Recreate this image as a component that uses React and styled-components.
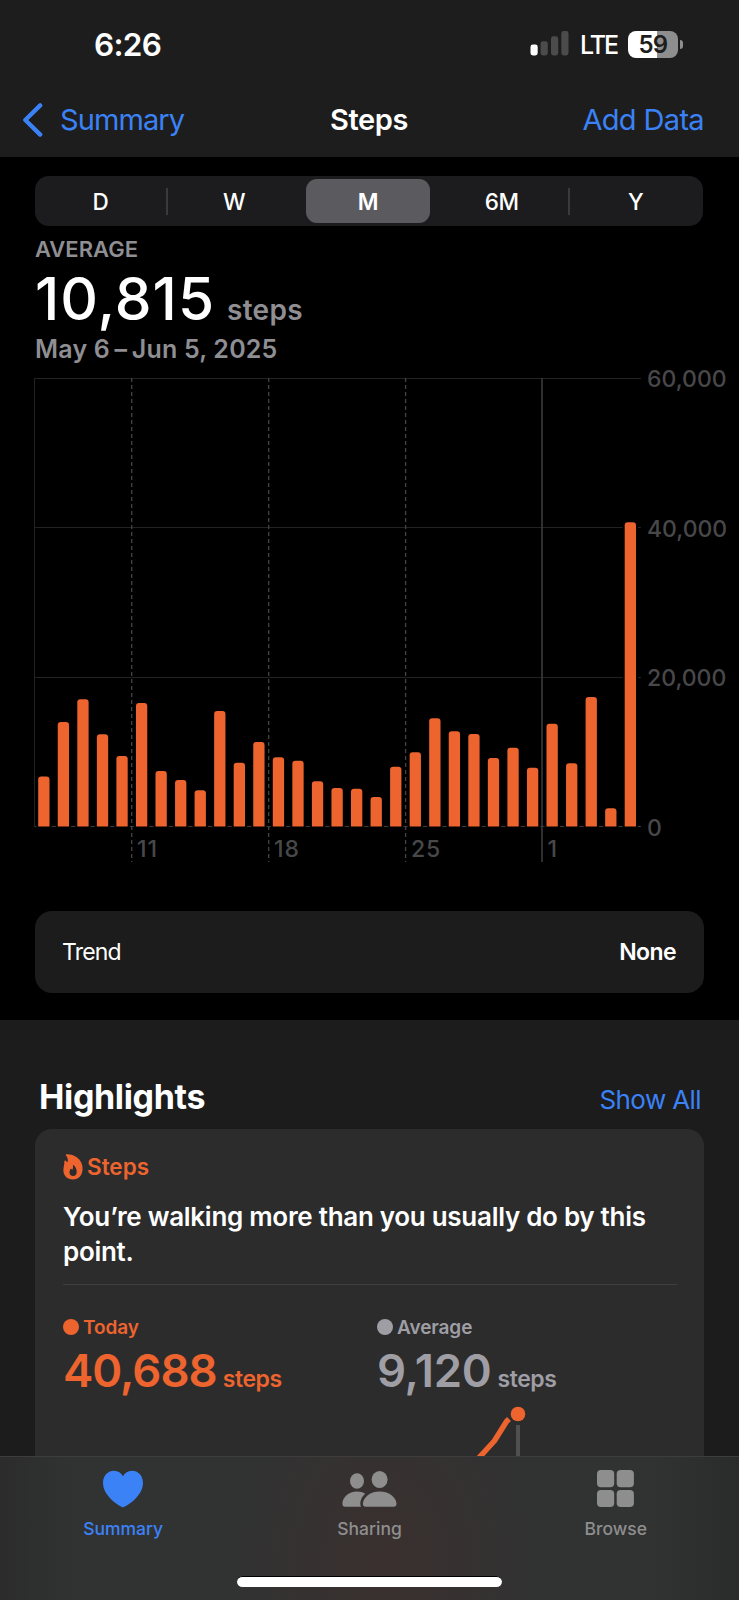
import React from "react";
import styled, { createGlobalStyle } from "styled-components";

const GlobalStyle = createGlobalStyle`
  * {
    box-sizing: border-box;
  }

  body {
    margin: 0;
    background: #000;
    font-family: Inter, "Liberation Sans", sans-serif;
    -webkit-font-smoothing: antialiased;
  }
`;

const BLUE = "#3b82f7";
const ORANGE = "#ed642f";

// daily steps, May 6 - Jun 5
const days = [
  6690, 13990, 17030, 12340, 9440, 16530, 7430, 6220, 4840, 15460, 8530,
  11300, 9260, 8800, 6050, 5150, 5060, 3950, 8000, 9930, 14480, 12740, 12380,
  9170, 10540, 7870, 13760, 8450, 17330, 2440, 40688,
];

const weeks = [
  { x: 131.7, label: "11" },
  { x: 268.7, label: "18" },
  { x: 405.6, label: "25" },
  { x: 542, label: "1", solid: true },
];

const StepsChart = () => {
  const base = 458.5;
  const scale = 448.5 / 60000;

  return (
    <ChartSvg width="739" height="500" viewBox="0 0 739 500">
      {[0, 20000, 40000, 60000].map((v) => (
        <g key={v}>
          <rect x="34" y={Math.floor(base - v * scale)} width="607" height="1" fill={v ? "#222224" : "#3a3a3c"} />
          <text x="647" y={base - v * scale + 9} className="axis">
            {v.toLocaleString("en-US")}
          </text>
        </g>
      ))}
      <rect x="34" y="10" width="1" height="449" fill="#222224" />
      {weeks.map((w) => (
        <g key={w.label}>
          <line
            x1={w.x}
            x2={w.x}
            y1="10"
            y2="494"
            stroke={w.solid ? "#3a3a3c" : "#444446"}
            strokeWidth={w.solid ? 1.6 : 1.3}
            strokeDasharray={w.solid ? "none" : "4 3"}
          />
          <text x={w.x + 5.4} y="489.4" className="axis week">
            {w.label}
          </text>
        </g>
      ))}
      {days.map((v, i) => {
        const x = 38.2 + i * 19.55;
        const h = v * scale;
        const y = base - h;
        return (
          <g key={i}>
            <rect x={x - 2} y={y} width="15.3" height={h + 1} fill="#000" />
            <path
              d={`M${x} ${base}V${y + 3}q0 -3 3 -3h5.3q3 0 3 3V${base}z`}
              fill={ORANGE}
            />
          </g>
        );
      })}
    </ChartSvg>
  );
};

const Signal = () => (
  <svg width="39" height="28" viewBox="0 0 39 28">
    <rect x="0.5" y="14.5" width="7.2" height="11" rx="2.4" fill="#fff" />
    <rect x="10.6" y="11.3" width="7.2" height="14.2" rx="2.4" fill="#4b4b4c" />
    <rect x="21" y="6.3" width="7.2" height="19.2" rx="2.4" fill="#4b4b4c" />
    <rect x="31.3" y="1" width="7.2" height="24.5" rx="2.4" fill="#4b4b4c" />
  </svg>
);

const Flame = () => (
  <svg width="20" height="26" viewBox="0 0 20 26">
    <path
      fill={ORANGE}
      fillRule="evenodd"
      d="M3.4 0.3C10.5 0 19.6 4.6 19.6 14.5C19.6 21.2 15.8 25.4 9.9 25.4C4.3 25.4 0.4 21.7 0.4 16.2C0.4 12.6 1.6 10.8 1.3 7.4C1.4 6.5 2.2 6.3 2.9 6.9L4.6 8.2C5.3 6.2 4.6 3.5 3 1.5C2.5 0.9 2.7 0.4 3.4 0.3ZM9.9 11.6C10.3 13.6 9.9 14.9 9.2 16.1L8.3 15.1C7.9 14.7 7.4 14.8 7.2 15.4C6.9 16.4 6.5 17.1 6.5 18.4C6.5 20.6 7.9 21.9 10 21.9C12.3 21.9 13.7 20.3 13.7 17.9C13.7 14.9 12.3 12.7 10.7 11.2C10.2 10.7 9.8 11 9.9 11.6Z"
    />
  </svg>
);

const HeartIcon = () => (
  <svg width="40" height="38" viewBox="0 0 40 38">
    <path
      fill={BLUE}
      d="M20 37.3C18.3 37.3 0 27 0 13C0 5.600 5 0.800 11 0.800C15 0.800 18.3 2.900 20 6.200C21.7 2.900 25 0.800 29 0.800C35 0.800 40 5.600 40 13C40 27 21.7 37.3 20 37.3Z"
    />
  </svg>
);

const PeopleIcon = () => (
  <svg width="55" height="38" viewBox="0 0 55 38" fill="#8e8e8e">
    <ellipse cx="15" cy="11" rx="7" ry="7.7" />
    <path d="M3.2 36.8C1.2 36.8 0.4 35.6 0.4 33.8C0.4 27.5 6.5 21.4 15 21.4C18.3 21.4 21 22.3 23.2 23.7C19.8 26.6 18.3 30.2 18.3 33.3C18.3 34.7 18.5 35.9 19 36.8Z" />
    <ellipse cx="37.6" cy="9.5" rx="8" ry="8.6" />
    <path d="M23.8 36.8C21.8 36.8 20.9 35.6 20.9 33.8C20.9 27.9 27.6 21.4 37.6 21.4C47.7 21.4 54.5 27.9 54.5 33.8C54.5 35.6 53.6 36.8 51.6 36.8Z" />
  </svg>
);

const BrowseIcon = () => (
  <svg width="37" height="38" viewBox="0 0 37 38" fill="#8e8e8e">
    <rect x="0" y="0" width="17.2" height="17.3" rx="4" />
    <rect x="19.7" y="0" width="17.2" height="17.3" rx="4" />
    <rect x="0" y="19.9" width="17.2" height="17.2" rx="4" />
    <rect x="19.7" y="19.9" width="17.2" height="17.2" rx="4" />
  </svg>
);

const TrendLine = () => (
  <svg width="60" height="52" viewBox="470 1405 60 52">
    <path
      d="M476 1461L494.3 1441L506.5 1421.500L509 1419"
      fill="none"
      stroke={ORANGE}
      strokeWidth="5.5"
      strokeLinejoin="round"
    />
    <rect x="516" y="1425" width="4" height="32" fill="#505052" />
    <circle cx="518" cy="1414" r="7.3" fill={ORANGE} />
  </svg>
);

const App = () => {
  return (
    <Screen>
      <GlobalStyle />
      <StatusBar>
        <Clock>6:26</Clock>
        <StatusIcons>
          <Signal />
          <Carrier>LTE</Carrier>
          <Battery>59</Battery>
          <BatteryNub />
        </StatusIcons>
      </StatusBar>
      <NavBar>
        <BackButton>
          <svg width="20" height="36" viewBox="0 0 20 36">
            <path
              d="M17.2 3.400L2.3 18L17.2 32.600"
              fill="none"
              stroke={BLUE}
              strokeWidth="4.3"
              strokeLinecap="round"
              strokeLinejoin="round"
            />
          </svg>
          <NavLabel $spacing="-0.9px">Summary</NavLabel>
        </BackButton>
        <NavTitle>Steps</NavTitle>
        <AddButton>
          <NavLabel $spacing="-0.65px">Add Data</NavLabel>
        </AddButton>
      </NavBar>

      <ChartPanel>
        <Segments>
          <Segment>D</Segment>
          <Divider />
          <Segment>W</Segment>
          <Divider $hidden />
          <Segment $active>M</Segment>
          <Divider $hidden />
          <Segment>6M</Segment>
          <Divider />
          <Segment>Y</Segment>
        </Segments>
        <Summary>
          <Caption>AVERAGE</Caption>
          <Total>
            <TotalValue>10,815</TotalValue>
            <TotalUnit>steps</TotalUnit>
          </Total>
          <DateRange>
            May 6<span>–</span>Jun 5, 2025
          </DateRange>
        </Summary>
        <StepsChart />
        <TrendCard>
          <span>Trend</span>
          <strong>None</strong>
        </TrendCard>
      </ChartPanel>

      <Highlights>
        <SectionHead>
          <h2>Highlights</h2>
          <ShowAll>Show All</ShowAll>
        </SectionHead>
        <HighlightCard>
          <CardTitle>
            <Flame />
            <span>Steps</span>
          </CardTitle>
          <Message>
            You’re walking more than you usually do by this point.
          </Message>
          <Stats>
            <Stat $color={ORANGE}>
              <StatLabel>
                <Dot />
                Today
              </StatLabel>
              <StatRow>
                <StatValue $spacing="-1px">40,688</StatValue>
                <StatUnit>steps</StatUnit>
              </StatRow>
            </Stat>
            <Stat $color="#9f9ea5">
              <StatLabel>
                <Dot />
                Average
              </StatLabel>
              <StatRow>
                <StatValue $spacing="-0.3px">9,120</StatValue>
                <StatUnit>steps</StatUnit>
              </StatRow>
            </Stat>
          </Stats>
          <TrendHolder>
            <TrendLine />
          </TrendHolder>
        </HighlightCard>
      </Highlights>

      <TabBar>
        <Tabs>
          <Tab $active>
            <HeartIcon />
            <span>Summary</span>
          </Tab>
          <Tab>
            <PeopleIcon />
            <span>Sharing</span>
          </Tab>
          <Tab>
            <BrowseIcon />
            <span>Browse</span>
          </Tab>
        </Tabs>
        <HomeIndicator />
      </TabBar>
    </Screen>
  );
};

const Screen = styled.div`
  width: 739px;
  height: 1600px;
  display: flex;
  flex-direction: column;
  overflow: hidden;
  background: #000;
  color: #fff;
  white-space: nowrap;
`;

const StatusBar = styled.div`
  height: 88px;
  flex: none;
  display: flex;
  justify-content: space-between;
  align-items: center;
  padding: 0 56px 0 94px;
  background: #1d1d1d;
`;

const Clock = styled.div`
  font-size: 31.5px;
  font-weight: 600;
  line-height: 40px;
  letter-spacing: -0.7px;
  padding-top: 1px;
`;

const StatusIcons = styled.div`
  display: flex;
  align-items: center;
`;

const Carrier = styled.div`
  width: 38px;
  margin-left: 11px;
  font-size: 25px;
  font-weight: 500;
  line-height: 30px;
  letter-spacing: -2px;
  padding-top: 2px;
`;

const Battery = styled.div`
  width: 50px;
  height: 27px;
  margin-left: 10px;
  border-radius: 8px;
  background: linear-gradient(to right, #fff 59%, #8e8e8e 59%);
  color: #1d1d1d;
  font-size: 24px;
  font-weight: 600;
  line-height: 27px;
  letter-spacing: -0.8px;
  text-align: center;
`;

const BatteryNub = styled.div`
  width: 3.5px;
  height: 9px;
  margin-left: 1.5px;
  border-radius: 0 5px 5px 0;
  background: #8e8e8e;
`;

const NavBar = styled.div`
  height: 69px;
  flex: none;
  display: grid;
  grid-template-columns: 1fr auto 1fr;
  align-items: center;
  padding: 0 35px 6px 23px;
  background: #1d1d1d;
`;

const BackButton = styled.div`
  display: flex;
  align-items: center;
  gap: 17px;
`;

const NavLabel = styled.span`
  color: ${BLUE};
  font-size: 29px;
  line-height: 36px;
  letter-spacing: ${(p) => p.$spacing};
`;

const NavTitle = styled.div`
  font-size: 29px;
  font-weight: 600;
  line-height: 36px;
  letter-spacing: -0.4px;
  padding-left: 11px;
`;

const AddButton = styled.div`
  text-align: right;
`;

const ChartPanel = styled.div`
  height: 863px;
  flex: none;
  padding-top: 19px;
`;

const Segments = styled.div`
  width: 668px;
  height: 50px;
  margin-left: 35px;
  padding: 3px 5px 3px 3px;
  display: flex;
  align-items: center;
  border-radius: 14px;
  background: #1c1c1e;
`;

const Segment = styled.div`
  flex: 1;
  height: 44px;
  border-radius: 11px;
  background: ${(p) => (p.$active ? "#5b5a5f" : "transparent")};
  font-size: 22.5px;
  font-weight: ${(p) => (p.$active ? 600 : 500)};
  line-height: 45px;
  letter-spacing: -0.3px;
  text-align: center;
`;

const Divider = styled.div`
  width: 2px;
  height: 27px;
  margin: 0 3.5px;
  background: ${(p) => (p.$hidden ? "transparent" : "#3a3a3d")};
`;

const Summary = styled.div`
  height: 142px;
  padding: 9px 0 0 35px;
  color: #8e8e93;
  font-weight: 600;
`;

const Caption = styled.div`
  font-size: 22px;
  line-height: 29px;
`;

const Total = styled.div`
  height: 68px;
  display: flex;
  align-items: baseline;
  line-height: 70px;
`;

const TotalValue = styled.div`
  width: 192px;
  color: #fff;
  font-size: 58.5px;
  font-weight: 500;
  letter-spacing: 1px;
`;

const TotalUnit = styled.div`
  font-size: 28px;
  letter-spacing: 0.3px;
`;

const DateRange = styled.div`
  font-size: 25px;
  line-height: 35px;
  letter-spacing: 0.2px;

  span {
    margin: 0 4.5px;
  }
`;

const ChartSvg = styled.svg`
  display: block;
  overflow: visible;

  .axis {
    font-size: 23px;
    font-weight: 500;
    letter-spacing: 0;
    fill: #48484a;
  }

  .week {
    letter-spacing: 0.8px;
  }
`;

const TrendCard = styled.div`
  width: 669px;
  height: 82px;
  margin: 43px 0 0 35px;
  padding: 0 28px 0 27px;
  display: flex;
  justify-content: space-between;
  align-items: center;
  border-radius: 17px;
  background: #1c1c1c;
  font-size: 23px;
  letter-spacing: -0.8px;

  strong {
    font-weight: 600;
    letter-spacing: -0.6px;
  }
`;

const Highlights = styled.div`
  height: 436px;
  flex: none;
  padding-top: 57px;
  background: #1c1c1c;
`;

const SectionHead = styled.div`
  height: 52px;
  padding: 0 38px 0 39px;
  display: flex;
  justify-content: space-between;
  align-items: baseline;
  line-height: 40px;

  h2 {
    margin: 0;
    font-size: 34px;
    font-weight: 700;
    letter-spacing: -0.35px;
  }
`;

const ShowAll = styled.div`
  color: ${BLUE};
  font-size: 26px;
  letter-spacing: -0.6px;
`;

const HighlightCard = styled.div`
  width: 669px;
  height: 327px;
  margin-left: 35px;
  padding: 24px 27px 0 28px;
  border-radius: 17px 17px 0 0;
  background: #2c2c2c;
`;

const CardTitle = styled.div`
  height: 27px;
  display: flex;
  align-items: center;
  gap: 4px;
  color: ${ORANGE};
  font-size: 22.5px;
  font-weight: 600;
`;

const Message = styled.div`
  height: 105px;
  padding-top: 20px;
  border-bottom: 1px solid #3e3e3e;
  font-size: 26px;
  font-weight: 600;
  line-height: 34.5px;
  letter-spacing: -0.29px;
  white-space: normal;
`;

const Stats = styled.div`
  display: grid;
  grid-template-columns: 314px 1fr;
  padding-top: 29px;
`;

const Stat = styled.div`
  color: ${(p) => p.$color};
  font-weight: 600;
`;

const StatLabel = styled.div`
  height: 26px;
  display: flex;
  align-items: center;
  gap: 4px;
  font-size: 19px;
  letter-spacing: -0.1px;
`;

const Dot = styled.div`
  width: 16px;
  height: 16px;
  border-radius: 50%;
  background: currentColor;
`;

const StatRow = styled.div`
  height: 60px;
  display: flex;
  align-items: baseline;
  gap: 6px;
  line-height: 61px;
`;

const StatValue = styled.div`
  font-size: 45.5px;
  font-weight: 600;
  letter-spacing: ${(p) => p.$spacing};
`;

const StatUnit = styled.div`
  font-size: 23px;
  letter-spacing: -0.4px;
`;

const TrendHolder = styled.div`
  height: 52px;
  margin-top: 5px;
  padding-left: 407px;

  svg {
    display: block;
  }
`;

const TabBar = styled.div`
  flex: 1;
  border-top: 1px solid #3d3d3d;
  background: radial-gradient(ellipse 150px 220px at 385px 110px, #3a302f, rgba(58, 48, 47, 0)),
    linear-gradient(to right, #2c2c2c, #313232 10%, #313232 88%, #2a2b2b);
`;

const Tabs = styled.div`
  height: 119px;
  padding-top: 13px;
  display: grid;
  grid-template-columns: repeat(3, 1fr);
`;

const Tab = styled.div`
  display: flex;
  flex-direction: column;
  align-items: center;
  color: ${(p) => (p.$active ? BLUE : "#8e8e8e")};
  font-size: 17.5px;
  font-weight: 500;
  line-height: 24px;

  span {
    margin-top: 9px;
  }
`;

const HomeIndicator = styled.div`
  width: 265px;
  height: 11px;
  margin: 0 auto;
  border-radius: 6px;
  border-top: 1px solid #000;
  background: #fff;
`;

export default App;
